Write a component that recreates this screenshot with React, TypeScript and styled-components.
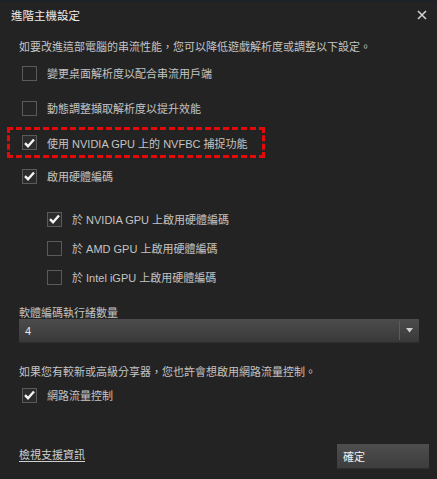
import React from 'react';
import styled, { createGlobalStyle } from 'styled-components';

const GlobalStyle = createGlobalStyle`
  html, body {
    margin: 0;
    padding: 0;
    background: #232323;
  }
  * {
    box-sizing: border-box;
  }
`;

const Dialog = styled.div`
  width: 437px;
  height: 479px;
  background: #232323;
  border-top: 2px solid #1d2229;
  font-family: 'Liberation Sans', 'Noto Sans CJK TC', sans-serif;
  font-size: 11px;
  color: #c4c4c4;
  display: flex;
  flex-direction: column;
  overflow: hidden;
`;

const TitleBar = styled.div`
  height: 28px;
  display: flex;
  align-items: center;
  justify-content: space-between;
  padding: 0 9px 2px 11px;
`;

const Title = styled.div`
  color: #ececec;
  font-size: 11.5px;
`;

const CloseButton = styled.div`
  width: 12px;
  height: 12px;
  display: flex;
  align-items: center;
  justify-content: center;
`;

const Body = styled.div`
  flex: 1;
  display: flex;
  flex-direction: column;
  padding: 0 18px 0 19px;
`;

const Text = styled.div<{ $top: number; $line?: number }>`
  margin-top: ${(p) => p.$top}px;
  line-height: ${(p) => p.$line ?? 16}px;
  white-space: nowrap;
`;

const Row = styled.label<{ $top?: number; $indent?: number }>`
  display: flex;
  align-items: center;
  gap: 10px;
  height: 20px;
  margin-top: ${(p) => p.$top ?? 0}px;
  padding-left: ${(p) => 3 + (p.$indent ?? 0)}px;
  white-space: nowrap;
`;

const Box = styled.span<{ $checked?: boolean }>`
  width: 15px;
  height: 15px;
  flex: none;
  border: 1px solid #5a5a5a;
  background: ${(p) => (p.$checked ? '#2c2c2c' : '#242424')};
  display: flex;
  align-items: center;
  justify-content: center;
`;

const Highlight = styled.div`
  margin-top: 9px;
  margin-left: -12px;
  width: 258px;
  height: 31px;
  border: 3px dashed #e40a0a;
  display: flex;
  align-items: center;
  padding-left: 9px;
`;

const Select = styled.div`
  margin-top: -1px;
  height: 24px;
  display: flex;
  align-items: stretch;
  background: linear-gradient(#4c4c4c, #3f3f3f 70%, #383838);
  border-bottom: 1px solid #2e2e2e;
  color: #e6e6e6;
`;

const SelectValue = styled.div`
  flex: 1;
  display: flex;
  align-items: center;
  padding-left: 6px;
`;

const SelectArrow = styled.div`
  width: 20px;
  display: flex;
  align-items: center;
  justify-content: center;
  border-left: 1px solid #5c5c5c;
  margin: 2px 0;
`;

const Footer = styled.div`
  display: flex;
  justify-content: space-between;
  align-items: center;
  padding: 0 8px 10px 19px;
  margin-top: auto;
`;

const Link = styled.a`
  color: #cfcfcf;
  text-decoration: underline;
  text-underline-offset: 2px;
  margin-top: -5px;
`;

const Button = styled.div`
  width: 92px;
  height: 25px;
  display: flex;
  align-items: center;
  padding-left: 6px;
  background: linear-gradient(#4e4e4e, #3d3d3d);
  border-bottom: 1px solid #2f2f2f;
  color: #f0f0f0;
`;

const Check = () => (
  <svg width="11" height="10" viewBox="0 0 11 10">
    <path d="M1 5.2 L4 8.2 L10 1.5" fill="none" stroke="#f4f4f4" strokeWidth="2.4" />
  </svg>
);

const CheckBox = ({ checked }: { checked?: boolean }) => (
  <Box $checked={checked}>{checked && <Check />}</Box>
);

const App = () => (
  <>
    <GlobalStyle />
    <Dialog>
      <TitleBar>
        <Title>進階主機設定</Title>
        <CloseButton>
          <svg width="10" height="10" viewBox="0 0 10 10">
            <path d="M1 1 L9 9 M9 1 L1 9" stroke="#d0d0d0" strokeWidth="1.6" />
          </svg>
        </CloseButton>
      </TitleBar>
      <Body>
        <Text $top={9}>如要改進這部電腦的串流性能，您可以降低遊戲解析度或調整以下設定。</Text>
        <Row $top={8}>
          <CheckBox />
          變更桌面解析度以配合串流用戶端
        </Row>
        <Row $top={15}>
          <CheckBox />
          動態調整擷取解析度以提升效能
        </Row>
        <Highlight>
          <Row>
            <CheckBox checked />
            使用 NVIDIA GPU 上的 NVFBC 捕捉功能
          </Row>
        </Highlight>
        <Row $top={8}>
          <CheckBox checked />
          啟用硬體編碼
        </Row>
        <Row $top={23} $indent={25}>
          <CheckBox checked />
          於 NVIDIA GPU 上啟用硬體編碼
        </Row>
        <Row $top={9} $indent={25}>
          <CheckBox />
          於 AMD GPU 上啟用硬體編碼
        </Row>
        <Row $top={9} $indent={25}>
          <CheckBox />
          於 Intel iGPU 上啟用硬體編碼
        </Row>
        <Text $top={19} $line={14}>軟體編碼執行緒數量</Text>
        <Select>
          <SelectValue>4</SelectValue>
          <SelectArrow>
            <svg width="7" height="5" viewBox="0 0 7 5">
              <path d="M0 0 L7 0 L3.5 4.5 Z" fill="#cfcfcf" />
            </svg>
          </SelectArrow>
        </Select>
        <Text $top={21}>如果您有較新或高級分享器，您也許會想啟用網路流量控制。</Text>
        <Row $top={5}>
          <CheckBox checked />
          網路流量控制
        </Row>
      </Body>
      <Footer>
        <Link>檢視支援資訊</Link>
        <Button>確定</Button>
      </Footer>
    </Dialog>
  </>
);

export default App;
